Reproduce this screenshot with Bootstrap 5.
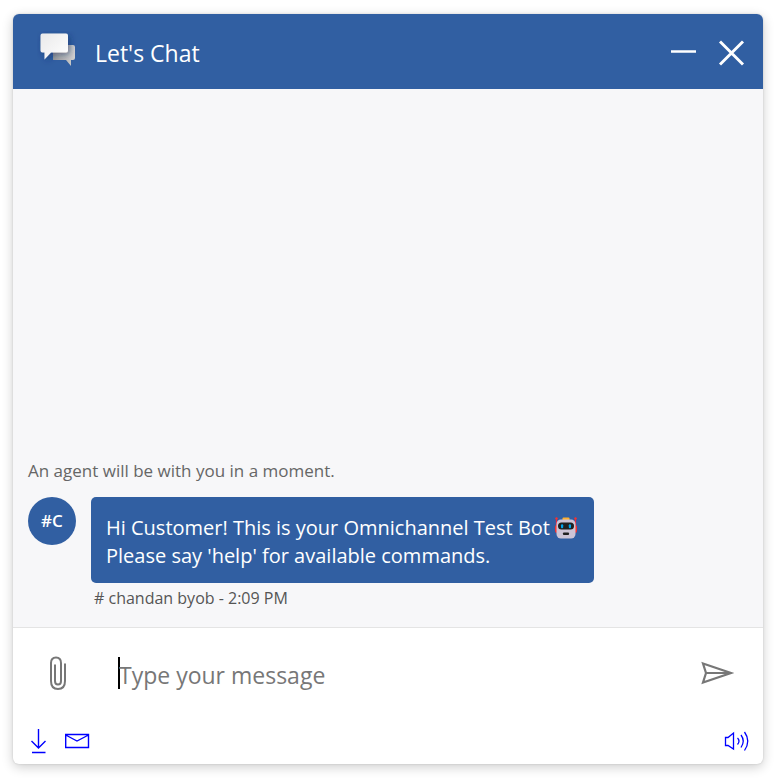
<!DOCTYPE html>
<html lang="en">
<head>
<meta charset="utf-8">
<meta name="viewport" content="width=device-width, initial-scale=1">
<title>Let's Chat</title>
<link href="https://cdn.jsdelivr.net/npm/bootstrap@5.3.0/dist/css/bootstrap.min.css" rel="stylesheet">
<style>
  :root { --chat-blue: #315fa2; --chat-grey: #666; }
  body { font-family: "Segoe UI", "Open Sans", "Noto Sans", sans-serif; background: #fff; }
  .page { padding: 14px 15px 17px 13px; }
  .chat-window { border-radius: 6px; box-shadow: 0 3px 12px rgba(0,0,0,.2), 0 0 2px rgba(0,0,0,.16); }
  .chat-head { background: var(--chat-blue); height: 75px; padding: 0 16px 0 24px; }
  .chat-title { font-size: 23px; line-height: 32px; padding-top: 2px; margin-left: 15px; }
  .chat-log { background: #f7f7f9; padding: 0 15px 17px; border-bottom: 1px solid #e4e4e4; }
  .notice { font-size: 17px; line-height: 24px; color: var(--chat-grey); margin-bottom: 14px; }
  .avatar { width: 48px; height: 48px; background: var(--chat-blue); font-size: 17px; font-weight: 600; }
  .message { margin-left: 15px; }
  .bubble { background: var(--chat-blue); border-radius: 5px; padding: 17px 17px 13px 15px; font-size: 20px; line-height: 28px; }
  .bubble svg { margin: -4px 0 0 5px; }
  .stamp { font-size: 16px; line-height: 24px; color: #555; padding: 3px 3px 0; }
  .compose { padding: 27px 28px 0 28px; }
  .compose-input { height: 36px; padding: 3px 0 0 1px; background: linear-gradient(#000, #000) left center / 2px 32px no-repeat; font-family: inherit; font-size: 23px; outline: 0; color: #333; margin: 0 32px 0 43px; }
  .compose-input::placeholder { color: #777; opacity: 1; }
  .icon-btn { line-height: 0; }
  .tools { padding: 36px 12px 9px 16px; }
</style>
</head>
<body>
<main class="page d-flex min-vh-100">
  <section class="chat-window d-flex flex-column flex-grow-1 overflow-hidden bg-white">
    <header class="chat-head d-flex align-items-center text-white">
      <svg width="43" height="42" viewBox="0 0 43 42" aria-hidden="true">
        <defs>
          <linearGradient id="front" x2="1" y2="1"><stop stop-color="#e9e9ea"/><stop offset="1" stop-color="#fff"/></linearGradient>
          <linearGradient id="back" x2="1" y2="0"><stop stop-color="#999"/><stop offset="1" stop-color="#d2d2d2"/></linearGradient>
          <filter id="soft" x="-50%" y="-50%" width="200%" height="200%"><feDropShadow dx="2" dy="2" stdDeviation="3" flood-color="#0c2c60" flood-opacity=".5"/></filter>
        </defs>
        <path fill="url(#back)" d="M16 14H36Q38 14 38 16V27Q38 29 36 29H34V35L29 29H16Z"/>
        <path fill="url(#front)" filter="url(#soft)" d="M5.500 2.500H29Q31 2.500 31 4.500V19.500Q31 21.500 29 21.500H14L7.500 28.500V21.500H5.500Q3.500 21.500 3.500 19.500V4.500Q3.500 2.500 5.500 2.500Z"/>
      </svg>
      <h1 class="chat-title fw-normal mb-0">Let's Chat</h1>
      <div class="ms-auto d-flex align-items-center gap-3">
        <button type="button" class="icon-btn btn p-0 border-0 text-white" aria-label="Minimize">
          <svg width="32" height="32" viewBox="0 0 32 32"><path d="M4 15.500H29" stroke="#fff" stroke-width="2.700"/></svg>
        </button>
        <button type="button" class="icon-btn btn p-0 border-0 text-white" aria-label="Close">
          <svg width="32" height="32" viewBox="0 0 32 32"><path d="M5 5.500L28 28.500M28 5.500L5 28.500" stroke="#fff" stroke-width="2.900"/></svg>
        </button>
      </div>
    </header>

    <div class="chat-log d-flex flex-column justify-content-end flex-grow-1">
      <p class="notice">An agent will be with you in a moment.</p>
      <div class="d-flex align-items-start">
        <div class="avatar rounded-circle d-flex align-items-center justify-content-center text-white flex-shrink-0">#C</div>
        <div class="message">
          <div class="bubble text-white">Hi Customer! This is your Omnichannel Test Bot<svg width="22" height="22" viewBox="0 0 22 22" role="img" aria-label="Robot">
              <path d="M1.500 1V10M20.500 1V10" stroke="#e9263c" stroke-width="1.200"/>
              <circle cx="1.500" cy="1.500" r="1.200" fill="#f8312f"/><circle cx="20.500" cy="1.500" r="1.200" fill="#f8312f"/>
              <rect x="0" y="8" width="22" height="8" rx="2" fill="#f8312f"/>
              <rect x="7.500" y=".5" width="7" height="4" rx="1" fill="#ffb02e"/>
              <rect x="1.500" y="2.500" width="19" height="19" rx="4.500" fill="#cdc4d6"/>
              <rect x="3" y="5.500" width="16" height="7" rx="3.500" fill="#212121"/>
              <rect x="6" y="7.200" width="2.200" height="4" rx="1" fill="#00a6ed"/><rect x="13.800" y="7.200" width="2.200" height="4" rx="1" fill="#00a6ed"/>
              <rect x="8" y="15.500" width="6" height="2.500" rx=".8" fill="#212121"/>
            </svg><br>Please say 'help' for available commands.</div>
          <div class="stamp"># chandan byob - 2:09 PM</div>
        </div>
      </div>
    </div>

    <footer>
      <form class="compose d-flex align-items-center">
        <button type="button" class="icon-btn btn p-0 border-0" aria-label="Attach a file">
          <svg width="34" height="36" viewBox="0 0 34 36" fill="none" stroke="#777" stroke-width="2"><path d="M24 8.500V26Q24 34 17 34Q10 34 10 26V8Q10 2.500 15 2.500Q20 2.500 20 8V26Q20 29.500 17 29.500Q14 29.500 14 26V9.500"/></svg>
        </button>
        <input class="compose-input flex-grow-1 border-0" type="text" placeholder="Type your message" aria-label="Type your message">
        <button type="submit" class="icon-btn btn p-0 border-0" aria-label="Send">
          <svg width="36" height="36" viewBox="0 0 36 36" fill="none" stroke="#777" stroke-width="2.200"><path d="M4 8.500L32 18L4 27.500L7 18ZM7 18H31"/></svg>
        </button>
      </form>
      <div class="tools d-flex align-items-center">
        <button type="button" class="icon-btn btn p-0 border-0" aria-label="Download transcript">
          <svg width="20" height="28" viewBox="0 0 20 28" fill="none" stroke="#00f" stroke-width="1.400"><path d="M9.500 2V21M2.500 14L9.500 21L16.500 14M3 25.500H16.500"/></svg>
        </button>
        <button type="button" class="icon-btn btn p-0 border-0 ms-3" aria-label="Email transcript">
          <svg width="26" height="28" viewBox="0 0 26 28" fill="none" stroke="#00f" stroke-width="1.400"><path d="M.7 7.500H23.500V20.500H.7ZM.7 8L12 14L23.500 8"/></svg>
        </button>
        <button type="button" class="icon-btn btn p-0 border-0 ms-auto" aria-label="Toggle sound">
          <svg width="28" height="28" viewBox="0 0 28 28" fill="none" stroke="#00f" stroke-width="1.300"><path d="M2.500 10.500H5L10.500 6V22L5 18.500H2.500ZM14.500 11Q17.500 14 14.500 17.500M18 8Q22.500 14 18 20.500M21.500 5Q28 14 21.500 23.500"/></svg>
        </button>
      </div>
    </footer>
  </section>
</main>
<script src="https://cdn.jsdelivr.net/npm/bootstrap@5.3.0/dist/js/bootstrap.bundle.min.js"></script>
</body>
</html>
